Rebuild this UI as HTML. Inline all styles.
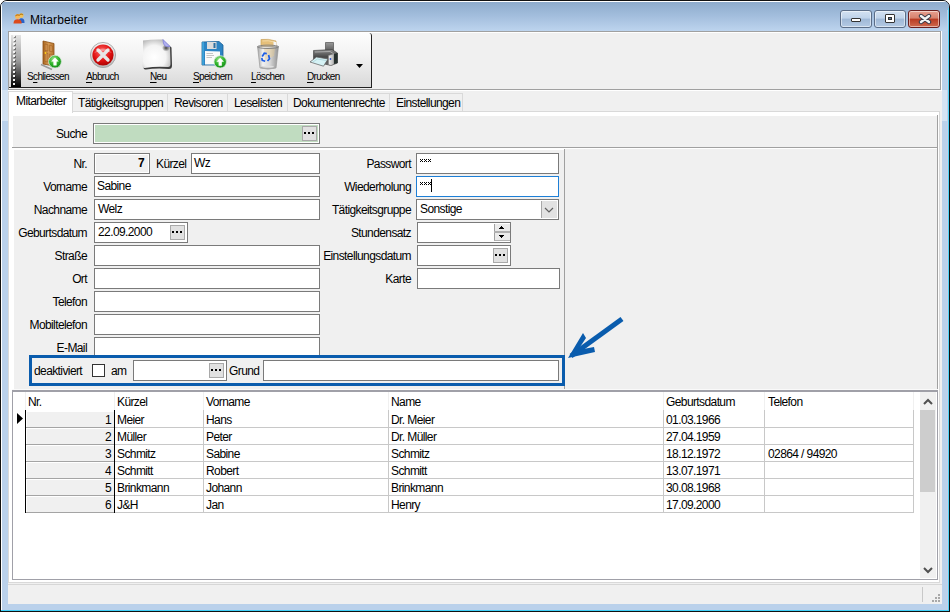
<!DOCTYPE html><html><head><meta charset="utf-8"><style>
*{margin:0;padding:0;box-sizing:border-box}
html,body{width:950px;height:612px;overflow:hidden;background:#fff}
body{font-family:"Liberation Sans",sans-serif;font-size:12px;color:#000;position:relative}
.a{position:absolute}
.lbl{position:absolute;white-space:nowrap;line-height:13px;letter-spacing:-0.6px}
.ell{width:15px;height:15px;background:#e1e1e1;border:1px solid #a9a9a9}
.ell:after{content:"";position:absolute;left:1px;top:5px;width:2px;height:2px;background:#000;box-shadow:4px 0 0 #000,8px 0 0 #000}
.wbtn{position:absolute;top:10px;height:18px;width:32px;border:1px solid #5b6d87;border-radius:3px;background:linear-gradient(#d3e1f1 0,#bfd3ea 45%,#9fb8d6 50%,#b4cae4 100%);box-shadow:inset 0 0 0 1px rgba(255,255,255,.5)}
.tl{position:absolute;top:70px;white-space:nowrap;line-height:13px;font-size:10px;letter-spacing:-0.65px}
.tl u{text-decoration:underline;text-underline-offset:1.5px;text-decoration-thickness:1px}
.tab{position:absolute;top:93px;height:19px;background:#f0f0f0;border:1px solid #d9d9d9;border-bottom:none;line-height:18px;padding-left:5px;white-space:nowrap;letter-spacing:-0.6px}
.gc{position:absolute;white-space:nowrap;line-height:13px;letter-spacing:-0.6px}
</style></head><body>
<div class="a" style="left:0;top:0;width:950px;height:612px;background:#bad1eb;border:1px solid #111;border-radius:7px 7px 0 0;overflow:hidden"><div class="a" style="left:0;top:0;width:948px;height:30px;background:linear-gradient(#fff 0,#fff 1px,#8eabcc 1px,#a3bedd 15px,#bdd4ee 30px)"></div><div class="a" style="left:0;top:0;width:1px;height:611px;background:#fff"></div><div class="a" style="left:1px;top:89px;width:7px;height:31px;background:#d4e3f3"></div><div class="a" style="left:941px;top:89px;width:7px;height:31px;background:#d4e3f3"></div></div>
<div class="a" style="left:0px;top:611px;width:950px;height:1px;background:#111"></div>
<div class="a" style="left:947px;top:10px;width:1px;height:600px;background:#c4d0e8"></div>
<div class="a" style="left:948px;top:8px;width:1px;height:603px;background:#50d4f8"></div>
<div class="a" style="left:1px;top:610px;width:948px;height:1px;background:#40d0f8"></div>
<svg class="a" style="left:13px;top:12px" width="12" height="12" viewBox="0 0 12 12"><circle cx="8.3" cy="3.6" r="2.3" fill="#f2c25a"/><path d="M6.3 2.6 Q8 0.6 10.3 2.4 L10 3.2 Q8 2 6.6 3.4Z" fill="#b8801a"/><path d="M5.5 11 Q5.5 6.3 8.3 6.3 Q11.5 6.3 11.5 10.5 L11.5 11Z" fill="#2a62c8"/><circle cx="4.6" cy="4.4" r="2.5" fill="#f7b85a"/><path d="M2.3 3.6 Q4.4 1.2 6.9 3.2 L6.6 4 Q4.4 2.6 2.6 4.4Z" fill="#c07a18"/><path d="M0.5 11.5 Q0.5 7.2 4.6 7.2 Q8.7 7.2 8.7 11.5Z" fill="#dc4a1c"/></svg>
<div class="lbl" style="left:30px;top:13px;font-size:12px;line-height:15px;letter-spacing:0.1px">Mitarbeiter</div>
<div class="wbtn" style="left:840px"><div class="a" style="left:10px;top:7px;width:10px;height:4px;background:#fff;border:1px solid #333;border-radius:1px"></div></div>
<div class="wbtn" style="left:874px"><div class="a" style="left:10px;top:3px;width:10px;height:9px;background:#fff;border:1px solid #333;border-radius:1px"><div class="a" style="left:2px;top:2px;width:4px;height:3px;background:#5b7ba3;border:1px solid #333"></div></div></div>
<div class="wbtn" style="left:908px;border-color:#6b1e1e;background:linear-gradient(#e8a090 0,#d7816d 45%,#b93a22 50%,#cf6a4e 100%)"><svg class="a" style="left:8px;top:2px" width="16" height="12" viewBox="0 0 16 12"><path d="M4 3 L12 9 M12 3 L4 9" stroke="#3a3a48" stroke-width="4.4" stroke-linecap="round"/><path d="M4 3 L12 9 M12 3 L4 9" stroke="#f4f4f4" stroke-width="2.4" stroke-linecap="round"/></svg></div>
<div class="a" style="left:8px;top:31px;width:934px;height:573px;background:#f0f0f0"></div>
<div class="a" style="left:8px;top:31px;width:933px;height:1px;background:#a0a0a0"></div>
<div class="a" style="left:9px;top:32px;width:931px;height:1px;background:#fff"></div>
<div class="a" style="left:8px;top:31px;width:1px;height:59px;background:#a0a0a0"></div>
<div class="a" style="left:9px;top:32px;width:1px;height:57px;background:#fff"></div>
<div class="a" style="left:940px;top:31px;width:1px;height:59px;background:#a0a0a0"></div>
<div class="a" style="left:941px;top:31px;width:1px;height:60px;background:#fff"></div>
<div class="a" style="left:9px;top:33px;width:363px;height:55px;background:linear-gradient(#fdfdfd,#f3f3f3 40%,#d9d9d9);border-right:1px solid #222;border-bottom:1px solid #222;border-radius:0 3px 0 0"></div>
<div class="a" style="left:11px;top:35px;width:10px;height:52px;background:linear-gradient(#e4e4e4,#9a9a9a 50%,#000)"></div>
<div class="a" style="left:13px;top:35px;width:2px;height:2px;background:#f4f4f4;box-shadow:1px 1px 0 rgba(0,0,0,.4)"></div>
<div class="a" style="left:13px;top:39px;width:2px;height:2px;background:#f4f4f4;box-shadow:1px 1px 0 rgba(0,0,0,.4)"></div>
<div class="a" style="left:13px;top:43px;width:2px;height:2px;background:#f4f4f4;box-shadow:1px 1px 0 rgba(0,0,0,.4)"></div>
<div class="a" style="left:13px;top:47px;width:2px;height:2px;background:#f4f4f4;box-shadow:1px 1px 0 rgba(0,0,0,.4)"></div>
<div class="a" style="left:13px;top:51px;width:2px;height:2px;background:#f4f4f4;box-shadow:1px 1px 0 rgba(0,0,0,.4)"></div>
<div class="a" style="left:13px;top:55px;width:2px;height:2px;background:#f4f4f4;box-shadow:1px 1px 0 rgba(0,0,0,.4)"></div>
<div class="a" style="left:13px;top:59px;width:2px;height:2px;background:#f4f4f4;box-shadow:1px 1px 0 rgba(0,0,0,.4)"></div>
<div class="a" style="left:13px;top:63px;width:2px;height:2px;background:#f4f4f4;box-shadow:1px 1px 0 rgba(0,0,0,.4)"></div>
<div class="a" style="left:13px;top:67px;width:2px;height:2px;background:#f4f4f4;box-shadow:1px 1px 0 rgba(0,0,0,.4)"></div>
<div class="a" style="left:13px;top:71px;width:2px;height:2px;background:#f4f4f4;box-shadow:1px 1px 0 rgba(0,0,0,.4)"></div>
<div class="a" style="left:13px;top:75px;width:2px;height:2px;background:#f4f4f4;box-shadow:1px 1px 0 rgba(0,0,0,.4)"></div>
<div class="a" style="left:13px;top:79px;width:2px;height:2px;background:#f4f4f4;box-shadow:1px 1px 0 rgba(0,0,0,.4)"></div>
<div class="a" style="left:13px;top:83px;width:2px;height:2px;background:#f4f4f4;box-shadow:1px 1px 0 rgba(0,0,0,.4)"></div>
<div class="tl" style="left:27px">S<u>c</u>hliessen</div>
<div class="tl" style="left:86px"><u>A</u>bbruch</div>
<div class="tl" style="left:150px"><u>N</u>eu</div>
<div class="tl" style="left:193px"><u>S</u>peichern</div>
<div class="tl" style="left:251px"><u>L</u>öschen</div>
<div class="tl" style="left:307px"><u>D</u>rucken</div>
<svg class="a" style="left:36px;top:38px" width="30" height="34" viewBox="36 38 30 34"><defs><linearGradient id="dg" x1="0" x2="1"><stop offset="0" stop-color="#a8651f"/><stop offset="0.5" stop-color="#d59a55"/><stop offset="1" stop-color="#b5742e"/></linearGradient></defs><path d="M41 64.5 L52 69.5" stroke="#9a9a9a" stroke-width="1.6"/><path d="M43 41 L54 43.5 L54 66 L43 64 Z" fill="url(#dg)" stroke="#8a4d12" stroke-width="0.8"/><path d="M45 44 L48 44.8 L48 51 L45 50.5Z M49.5 45.2 L52.5 46 L52.5 51.8 L49.5 51.3Z M45 53 L48 53.5 L48 62 L45 61.5Z M49.5 54 L52.5 54.5 L52.5 62.5 L49.5 62Z" fill="#c98a4a" stroke="#9c5c1c" stroke-width="0.5"/><circle cx="45.5" cy="53" r="0.9" fill="#ffd21a"/><defs><radialGradient id="ga1" cx="0.4" cy="0.3" r="0.8"><stop offset="0" stop-color="#9be08a"/><stop offset="0.5" stop-color="#2fb52a"/><stop offset="1" stop-color="#0c7d14"/></radialGradient></defs><circle cx="55" cy="61.6" r="6.4" fill="url(#ga1)" stroke="#d8e8d8" stroke-width="0.8"/><path d="M55 57.4 L58.8 61.4 L56.6 61.4 L56.6 65.4 L53.4 65.4 L53.4 61.4 L51.2 61.4 Z" fill="#fff"/></svg><svg class="a" style="left:88px;top:40px" width="30" height="30" viewBox="88 40 30 30"><defs><radialGradient id="rg" cx="0.45" cy="0.35" r="0.7"><stop offset="0" stop-color="#ff6a6a"/><stop offset="0.6" stop-color="#e01010"/><stop offset="1" stop-color="#a00000"/></radialGradient><linearGradient id="ring" x1="0" y1="0" x2="0" y2="1"><stop offset="0" stop-color="#f4f4f4"/><stop offset="1" stop-color="#b8b8b8"/></linearGradient></defs><circle cx="103" cy="55" r="12.6" fill="url(#ring)" stroke="#9c9c9c" stroke-width="0.8"/><circle cx="103" cy="55" r="10.6" fill="url(#rg)"/><path d="M98 50 L108 60 M108 50 L98 60" stroke="#e6e6e6" stroke-width="3.4" stroke-linecap="round"/><path d="M94 53 Q103 44 112 53 Q103 49 94 53Z" fill="#fff" opacity="0.35"/></svg><svg class="a" style="left:138px;top:36px" width="38" height="36" viewBox="138 36 38 36"><defs><radialGradient id="pg" cx="0.42" cy="0.62" r="0.75"><stop offset="0" stop-color="#ffffff"/><stop offset="0.55" stop-color="#f4f4f4"/><stop offset="1" stop-color="#a8a8a8"/></radialGradient><radialGradient id="fs" cx="0.5" cy="0.5" r="0.5"><stop offset="0" stop-color="#000" stop-opacity="0.7"/><stop offset="1" stop-color="#000" stop-opacity="0"/></radialGradient></defs><path d="M144.5 41.5 Q153 40 163.5 40.5 L171.5 47.5 L172 65.5 Q172 69 169 69 Q156 68 146 69.5 Q143.5 70 143.5 67.5Z" fill="#1e1e1e" opacity="0.85"/><path d="M143 40.5 Q153 39 163 39.5 L170 46.5 L170.5 64 Q170.5 66.8 168 67 Q156 66 145 68 Q142.5 68.5 142.5 66 Q143.5 54 143 40.5Z" fill="url(#pg)"/><ellipse cx="166" cy="48" rx="4" ry="3.5" fill="url(#fs)"/><path d="M163 39.5 L170 46.5 Q166.5 47.5 164.5 45.5 Q163 43.5 163 39.5Z" fill="#b0b0f0" stroke="#7070d8" stroke-width="0.6"/></svg><svg class="a" style="left:198px;top:38px" width="32" height="34" viewBox="198 38 32 34"><path d="M202 42 L219 41.5 L223 45 L223 65 L202 65 Z" fill="#2d84c4" stroke="#1a5f96" stroke-width="0.8"/><path d="M203 42 L203 65" stroke="#4fc0f0" stroke-width="1"/><path d="M207 42 L216.5 42 L216.5 49 L207 49 Z" fill="#dcdcdc"/><path d="M213.5 43 L215.5 43 L215.5 48 L213.5 48Z" fill="#2d6fa0"/><path d="M205 51 L220 51.5 L220 64.5 L205 64.5 Z" fill="#fafafa"/><path d="M206.5 53.5H213 M206.5 55.5H214 M206.5 57.5H212" stroke="#a0a0a0" stroke-width="0.6"/><defs><radialGradient id="ga2" cx="0.4" cy="0.3" r="0.8"><stop offset="0" stop-color="#9be08a"/><stop offset="0.5" stop-color="#2fb52a"/><stop offset="1" stop-color="#0c7d14"/></radialGradient></defs><circle cx="220.2" cy="61.9" r="6.2" fill="url(#ga2)" stroke="#d8e8d8" stroke-width="0.8"/><path d="M220.2 57.699999999999996 L224.0 61.699999999999996 L221.79999999999998 61.699999999999996 L221.79999999999998 65.7 L218.6 65.7 L218.6 61.699999999999996 L216.39999999999998 61.699999999999996 Z" fill="#fff"/></svg><svg class="a" style="left:252px;top:36px" width="32" height="36" viewBox="252 36 32 36"><defs><linearGradient id="bg1" x1="0" x2="1"><stop offset="0" stop-color="#9c9c9c"/><stop offset="0.25" stop-color="#f2f2f2"/><stop offset="0.6" stop-color="#d6d6d6"/><stop offset="1" stop-color="#8a8a8a"/></linearGradient></defs><path d="M261 49 L261 39.5 Q268 38.5 276 41 L276 49Z" fill="#e6c07a" stroke="#c49a50" stroke-width="0.6"/><path d="M262.5 41 Q268 40 274.5 42" stroke="#f6e0b0" stroke-width="0.8" fill="none"/><path d="M273.5 41.5 L276 42 L276 48 L273.5 48Z" fill="#f6f6f6"/><path d="M257.5 46.5 L278.5 46.5 L276 68 Q268 70 260 68 Z" fill="url(#bg1)" opacity="0.92" stroke="#8c8c8c" stroke-width="0.6"/><path d="M264 48 L275 48 L274 56 L265 60Z" fill="#e8cc90" opacity="0.45"/><ellipse cx="268" cy="46.8" rx="10.5" ry="1.7" fill="none" stroke="#7e7e7e" stroke-width="0.9"/><ellipse cx="268" cy="67.6" rx="7.6" ry="1.6" fill="#a9a9a9"/><ellipse cx="268" cy="66.8" rx="6" ry="1" fill="#e0e0e0"/><path d="M262.2 56.5 L264.3 53.2 L266.8 53.6" stroke="#1d5ee6" stroke-width="1.7" fill="none"/><path d="M268.6 55 L269.5 58.8 L267.5 61" stroke="#1d5ee6" stroke-width="1.7" fill="none"/><path d="M265.2 61.2 L262.3 60.4 L261.8 58" stroke="#1d5ee6" stroke-width="1.7" fill="none"/></svg><svg class="a" style="left:305px;top:38px" width="38" height="32" viewBox="305 38 38 32"><defs><linearGradient id="pb" x1="0" y1="0" x2="0" y2="1"><stop offset="0" stop-color="#8a8a8a"/><stop offset="0.45" stop-color="#4a4a4a"/><stop offset="1" stop-color="#6a6a6a"/></linearGradient><linearGradient id="ph" x1="0" y1="0" x2="0" y2="1"><stop offset="0" stop-color="#9a9a9a"/><stop offset="1" stop-color="#5a5a5a"/></linearGradient><linearGradient id="ps" x1="0" y1="0" x2="1" y2="0"><stop offset="0" stop-color="#f4f4f4"/><stop offset="1" stop-color="#b0b0b0"/></linearGradient></defs><path d="M325.5 42.5 L333.5 42.5 L333.5 51 L325.5 51Z" fill="url(#ph)" stroke="#3e3e3e" stroke-width="0.6"/><path d="M313.5 50.5 L332 49.5 L337.5 53 L337.5 63 L331 65.5 L313.5 61.5 Z" fill="url(#pb)" stroke="#3a3a3a" stroke-width="0.6"/><path d="M315 52 L330 51.5 L334 54" stroke="#b8b8b8" stroke-width="0.8" fill="none"/><path d="M328.5 55.5 L334 53.8 L334 64 L331 65.5 L328.5 64.5Z" fill="url(#ps)" stroke="#7a7a7a" stroke-width="0.5"/><path d="M334 54 L337.5 53 L337.5 63 L334 64Z" fill="#26302e"/><circle cx="330.5" cy="59" r="0.9" fill="#3355cc"/><path d="M310 62 L316.5 57 L328 59 L323.5 66.2 Z" fill="#d6f2f5" stroke="#5a5a5a" stroke-width="0.7"/><path d="M313 62 L317.5 59 L326 60.5" stroke="#9cc9d0" stroke-width="0.6" fill="none"/></svg>
<svg class="a" style="left:356px;top:64px" width="8" height="5"><path d="M0 0H7L3.5 4Z" fill="#000"/></svg>
<div class="a" style="left:8px;top:89px;width:933px;height:1px;background:#a0a0a0"></div>
<div class="a" style="left:8px;top:90px;width:934px;height:1px;background:#fff"></div>
<div class="tab" style="left:72px;width:96px;padding-left:5px">Tätigkeitsgruppen</div>
<div class="tab" style="left:167px;width:61px;padding-left:6px">Revisoren</div>
<div class="tab" style="left:227px;width:61px;padding-left:6px">Leselisten</div>
<div class="tab" style="left:287px;width:103px;padding-left:5px">Dokumentenrechte</div>
<div class="tab" style="left:389px;width:74px;padding-left:6px">Einstellungen</div>
<div class="a" style="left:8px;top:111px;width:932px;height:472px;background:#fff;border:1px solid #d9d9d9"></div>
<div class="tab" style="left:8px;top:91px;height:22px;width:65px;background:#fff;border-color:#d9d9d9;padding-left:7px;line-height:19px">Mitarbeiter</div>
<div class="a" style="left:13px;top:116px;width:924px;height:31px;background:#f0f0f0"></div>
<div class="a" style="left:12px;top:147px;width:926px;height:1px;background:#a0a0a0"></div>
<div class="a" style="left:937px;top:115px;width:1px;height:275px;background:#a0a0a0"></div>
<div class="lbl" style="right:863px;top:128px;">Suche</div>
<div class="a" style="left:93px;top:123px;width:227px;height:21px;background:#c0dcc0;border:1px solid #7a7a7a;box-shadow:inset 0 0 0 1px #fff"></div>
<div class="a ell" style="left:302px;top:126px"></div>
<div class="a" style="left:14px;top:150px;width:550px;height:239px;background:#f0f0f0"></div>
<div class="a" style="left:564px;top:149px;width:1px;height:240px;background:#a0a0a0"></div>
<div class="a" style="left:565px;top:149px;width:372px;height:240px;background:#f0f0f0"></div>
<div class="lbl" style="right:863px;top:158px;">Nr.</div>
<div class="lbl" style="right:863px;top:181px;">Vorname</div>
<div class="lbl" style="right:863px;top:204px;">Nachname</div>
<div class="lbl" style="right:863px;top:227px;">Geburtsdatum</div>
<div class="lbl" style="right:863px;top:250px;">Straße</div>
<div class="lbl" style="right:863px;top:273px;">Ort</div>
<div class="lbl" style="right:863px;top:296px;">Telefon</div>
<div class="lbl" style="right:863px;top:319px;">Mobiltelefon</div>
<div class="lbl" style="right:863px;top:342px;">E-Mail</div>
<div class="a" style="left:94px;top:153px;width:56px;height:21px;background:#f0f0f0;border:1px solid #7a7a7a;box-shadow:inset 0 0 0 1px #fff"><div class="lbl" style="right:5px;top:3px;font-weight:bold">7</div></div>
<div class="lbl" style="left:156px;top:158px;">Kürzel</div>
<div class="a" style="left:191px;top:153px;width:129px;height:21px;background:#fff;border:1px solid #7a7a7a;box-shadow:inset 0 0 0 1px #fff"><div class="lbl" style="left:2px;top:3px">Wz</div></div>
<div class="a" style="left:94px;top:176px;width:226px;height:21px;background:#fff;border:1px solid #7a7a7a;box-shadow:inset 0 0 0 1px #fff"><div class="lbl" style="left:3px;top:3px;left:2px">Sabine</div></div>
<div class="a" style="left:94px;top:199px;width:226px;height:21px;background:#fff;border:1px solid #7a7a7a;box-shadow:inset 0 0 0 1px #fff"><div class="lbl" style="left:3px;top:3px">Welz</div></div>
<div class="a" style="left:94px;top:222px;width:94px;height:21px;background:#fff;border:1px solid #7a7a7a;box-shadow:inset 0 0 0 1px #fff"><div class="lbl" style="left:3px;top:3px">22.09.2000</div></div>
<div class="a ell" style="left:170px;top:225px"></div>
<div class="a" style="left:94px;top:245px;width:226px;height:21px;background:#fff;border:1px solid #7a7a7a;box-shadow:inset 0 0 0 1px #fff"></div>
<div class="a" style="left:94px;top:268px;width:226px;height:21px;background:#fff;border:1px solid #7a7a7a;box-shadow:inset 0 0 0 1px #fff"></div>
<div class="a" style="left:94px;top:291px;width:226px;height:21px;background:#fff;border:1px solid #7a7a7a;box-shadow:inset 0 0 0 1px #fff"></div>
<div class="a" style="left:94px;top:314px;width:226px;height:21px;background:#fff;border:1px solid #7a7a7a;box-shadow:inset 0 0 0 1px #fff"></div>
<div class="a" style="left:94px;top:337px;width:226px;height:21px;background:#fff;border:1px solid #7a7a7a;box-shadow:inset 0 0 0 1px #fff"></div>
<div class="lbl" style="right:539px;top:158px;">Passwort</div>
<div class="lbl" style="right:539px;top:181px;">Wiederholung</div>
<div class="lbl" style="right:539px;top:204px;">Tätigkeitsgruppe</div>
<div class="lbl" style="right:539px;top:227px;">Stundensatz</div>
<div class="lbl" style="right:539px;top:250px;">Einstellungsdatum</div>
<div class="lbl" style="right:539px;top:273px;">Karte</div>
<div class="a" style="left:416px;top:153px;width:143px;height:21px;background:#fff;border:1px solid #7a7a7a;box-shadow:inset 0 0 0 1px #fff"><svg class="a" style="left:3px;top:5px" width="12" height="4" shape-rendering="crispEdges"><rect x="0" y="0" width="1" height="1"/><rect x="2" y="0" width="1" height="1"/><rect x="1" y="1" width="1" height="1"/><rect x="0" y="2" width="1" height="1"/><rect x="2" y="2" width="1" height="1"/><rect x="4" y="0" width="1" height="1"/><rect x="6" y="0" width="1" height="1"/><rect x="5" y="1" width="1" height="1"/><rect x="4" y="2" width="1" height="1"/><rect x="6" y="2" width="1" height="1"/><rect x="8" y="0" width="1" height="1"/><rect x="10" y="0" width="1" height="1"/><rect x="9" y="1" width="1" height="1"/><rect x="8" y="2" width="1" height="1"/><rect x="10" y="2" width="1" height="1"/></svg></div>
<div class="a" style="left:416px;top:176px;width:143px;height:21px;background:#fff;border:1px solid #1e7fd6;box-shadow:inset 0 0 0 1px #fff"><svg class="a" style="left:3px;top:5px" width="12" height="4" shape-rendering="crispEdges"><rect x="0" y="0" width="1" height="1"/><rect x="2" y="0" width="1" height="1"/><rect x="1" y="1" width="1" height="1"/><rect x="0" y="2" width="1" height="1"/><rect x="2" y="2" width="1" height="1"/><rect x="4" y="0" width="1" height="1"/><rect x="6" y="0" width="1" height="1"/><rect x="5" y="1" width="1" height="1"/><rect x="4" y="2" width="1" height="1"/><rect x="6" y="2" width="1" height="1"/><rect x="8" y="0" width="1" height="1"/><rect x="10" y="0" width="1" height="1"/><rect x="9" y="1" width="1" height="1"/><rect x="8" y="2" width="1" height="1"/><rect x="10" y="2" width="1" height="1"/></svg><div class="a" style="left:14px;top:2px;width:1px;height:13px;background:#000"></div></div>
<div class="a" style="left:416px;top:199px;width:143px;height:21px;background:#fff;border:1px solid #7a7a7a;box-shadow:inset 0 0 0 1px #fff"><div class="lbl" style="left:3px;top:3px">Sonstige</div><div class="a" style="left:124px;top:1px;width:16px;height:17px;background:#e2e2e2;border-left:1px solid #a8a8a8"><svg class="a" style="left:2px;top:6px" width="10" height="6"><path d="M1 1L5 5L9 1" stroke="#606060" fill="none" stroke-width="1.2"/></svg></div></div>
<div class="a" style="left:417px;top:222px;width:94px;height:21px;background:#fff;border:1px solid #7a7a7a;box-shadow:inset 0 0 0 1px #fff"><div class="a" style="left:76px;top:1px;width:16px;height:17px;background:#ebebeb;border-left:1px solid #a0a0a0;border-bottom:1px solid #b4b4b4"></div><div class="a" style="left:76px;top:8px;width:16px;height:2px;background:#b0b0b0"></div><svg class="a" style="left:81px;top:3px" width="5" height="12" shape-rendering="crispEdges"><rect x="2" y="0" width="1" height="1"/><rect x="1" y="1" width="3" height="1"/><rect x="0" y="2" width="5" height="1"/><rect x="0" y="9" width="5" height="1"/><rect x="1" y="10" width="3" height="1"/><rect x="2" y="11" width="1" height="1"/></svg></div>
<div class="a" style="left:417px;top:245px;width:94px;height:21px;background:#fff;border:1px solid #7a7a7a;box-shadow:inset 0 0 0 1px #fff"></div>
<div class="a ell" style="left:493px;top:248px"></div>
<div class="a" style="left:417px;top:268px;width:143px;height:21px;background:#fff;border:1px solid #7a7a7a;box-shadow:inset 0 0 0 1px #fff"></div>
<div class="a" style="left:29px;top:355px;width:536px;height:31px;border:3px solid #0a5cad;background:#f0f0f0"></div>
<div class="lbl" style="left:34px;top:365px;">deaktiviert</div>
<div class="a" style="left:92px;top:364px;width:13px;height:13px;background:#fff;border:1px solid #333"></div>
<div class="lbl" style="left:111px;top:365px;">am</div>
<div class="a" style="left:133px;top:360px;width:94px;height:21px;background:#fff;border:1px solid #7a7a7a;box-shadow:inset 0 0 0 1px #fff"></div>
<div class="a ell" style="left:209px;top:363px"></div>
<div class="lbl" style="left:229px;top:365px;">Grund</div>
<div class="a" style="left:263px;top:360px;width:296px;height:21px;background:#fff;border:1px solid #7a7a7a;box-shadow:inset 0 0 0 1px #fff"></div>
<svg class="a" style="left:560px;top:310px" width="70" height="55" viewBox="560 310 70 55"><path d="M622 319 L571 356" stroke="#0a5cad" stroke-width="5"/><path d="M568 358 L583 333 L586 338 L578 350 L594 347 L595 352 Z" fill="#0a5cad"/></svg>
<div class="a" style="left:12px;top:389px;width:926px;height:1px;background:#fafafa"></div>
<div class="a" style="left:12px;top:390px;width:926px;height:190px;background:#fff;border:2px solid #a0a0a8;border-right-width:1px;border-bottom-width:1px;border-left-width:1px"></div>
<div class="gc" style="left:28px;top:396px">Nr.</div>
<div class="gc" style="left:117px;top:396px">Kürzel</div>
<div class="gc" style="left:206px;top:396px">Vorname</div>
<div class="gc" style="left:391px;top:396px">Name</div>
<div class="gc" style="left:666px;top:396px">Geburtsdatum</div>
<div class="gc" style="left:768px;top:396px">Telefon</div>
<div class="a" style="left:25px;top:392px;width:1px;height:18px;background:#f0f0f0"></div>
<div class="a" style="left:114px;top:392px;width:1px;height:18px;background:#f0f0f0"></div>
<div class="a" style="left:203px;top:392px;width:1px;height:18px;background:#f0f0f0"></div>
<div class="a" style="left:388px;top:392px;width:1px;height:18px;background:#f0f0f0"></div>
<div class="a" style="left:663px;top:392px;width:1px;height:18px;background:#f0f0f0"></div>
<div class="a" style="left:764px;top:392px;width:1px;height:18px;background:#f0f0f0"></div>
<div class="a" style="left:913px;top:392px;width:1px;height:18px;background:#f0f0f0"></div>
<div class="a" style="left:27px;top:412px;width:87px;height:15px;background:#f0f0f0"></div>
<div class="gc" style="right:839px;top:414px">1</div>
<div class="gc" style="left:117px;top:414px">Meier</div>
<div class="gc" style="left:206px;top:414px">Hans</div>
<div class="gc" style="left:391px;top:414px">Dr. Meier</div>
<div class="gc" style="left:666px;top:414px">01.03.1966</div>
<div class="gc" style="left:768px;top:414px"></div>
<div class="a" style="left:26px;top:427px;width:888px;height:1px;background:#c8c8c8"></div>
<div class="a" style="left:26px;top:427px;width:88px;height:1px;background:#a4a4a4"></div>
<div class="a" style="left:27px;top:429px;width:87px;height:15px;background:#f0f0f0"></div>
<div class="gc" style="right:839px;top:431px">2</div>
<div class="gc" style="left:117px;top:431px">Müller</div>
<div class="gc" style="left:206px;top:431px">Peter</div>
<div class="gc" style="left:391px;top:431px">Dr. Müller</div>
<div class="gc" style="left:666px;top:431px">27.04.1959</div>
<div class="gc" style="left:768px;top:431px"></div>
<div class="a" style="left:26px;top:444px;width:888px;height:1px;background:#c8c8c8"></div>
<div class="a" style="left:26px;top:444px;width:88px;height:1px;background:#a4a4a4"></div>
<div class="a" style="left:27px;top:446px;width:87px;height:15px;background:#f0f0f0"></div>
<div class="gc" style="right:839px;top:448px">3</div>
<div class="gc" style="left:117px;top:448px">Schmitz</div>
<div class="gc" style="left:206px;top:448px">Sabine</div>
<div class="gc" style="left:391px;top:448px">Schmitz</div>
<div class="gc" style="left:666px;top:448px">18.12.1972</div>
<div class="gc" style="left:768px;top:448px">02864 / 94920</div>
<div class="a" style="left:26px;top:461px;width:888px;height:1px;background:#c8c8c8"></div>
<div class="a" style="left:26px;top:461px;width:88px;height:1px;background:#a4a4a4"></div>
<div class="a" style="left:27px;top:463px;width:87px;height:15px;background:#f0f0f0"></div>
<div class="gc" style="right:839px;top:465px">4</div>
<div class="gc" style="left:117px;top:465px">Schmitt</div>
<div class="gc" style="left:206px;top:465px">Robert</div>
<div class="gc" style="left:391px;top:465px">Schmitt</div>
<div class="gc" style="left:666px;top:465px">13.07.1971</div>
<div class="gc" style="left:768px;top:465px"></div>
<div class="a" style="left:26px;top:478px;width:888px;height:1px;background:#c8c8c8"></div>
<div class="a" style="left:26px;top:478px;width:88px;height:1px;background:#a4a4a4"></div>
<div class="a" style="left:27px;top:480px;width:87px;height:15px;background:#f0f0f0"></div>
<div class="gc" style="right:839px;top:482px">5</div>
<div class="gc" style="left:117px;top:482px">Brinkmann</div>
<div class="gc" style="left:206px;top:482px">Johann</div>
<div class="gc" style="left:391px;top:482px">Brinkmann</div>
<div class="gc" style="left:666px;top:482px">30.08.1968</div>
<div class="gc" style="left:768px;top:482px"></div>
<div class="a" style="left:26px;top:495px;width:888px;height:1px;background:#c8c8c8"></div>
<div class="a" style="left:26px;top:495px;width:88px;height:1px;background:#a4a4a4"></div>
<div class="a" style="left:27px;top:497px;width:87px;height:15px;background:#f0f0f0"></div>
<div class="gc" style="right:839px;top:499px">6</div>
<div class="gc" style="left:117px;top:499px">J&amp;H</div>
<div class="gc" style="left:206px;top:499px">Jan</div>
<div class="gc" style="left:391px;top:499px">Henry</div>
<div class="gc" style="left:666px;top:499px">17.09.2000</div>
<div class="gc" style="left:768px;top:499px"></div>
<div class="a" style="left:26px;top:512px;width:888px;height:1px;background:#c8c8c8"></div>
<div class="a" style="left:26px;top:512px;width:88px;height:1px;background:#a4a4a4"></div>
<div class="a" style="left:25px;top:410px;width:1px;height:103px;background:#000"></div>
<div class="a" style="left:114px;top:410px;width:1px;height:103px;background:#000"></div>
<div class="a" style="left:203px;top:410px;width:1px;height:103px;background:#c8c8c8"></div>
<div class="a" style="left:388px;top:410px;width:1px;height:103px;background:#c8c8c8"></div>
<div class="a" style="left:663px;top:410px;width:1px;height:103px;background:#c8c8c8"></div>
<div class="a" style="left:764px;top:410px;width:1px;height:103px;background:#c8c8c8"></div>
<div class="a" style="left:913px;top:410px;width:1px;height:103px;background:#c8c8c8"></div>
<svg class="a" style="left:17px;top:413px" width="7" height="11"><path d="M0 0L6 5.5L0 11Z" fill="#000"/></svg>
<div class="a" style="left:920px;top:392px;width:16px;height:186px;background:#f0f0f0"></div>
<div class="a" style="left:920px;top:410px;width:15px;height:82px;background:#cdcdcd"></div>
<svg class="a" style="left:923px;top:398px" width="10" height="7"><path d="M1 6L5 2L9 6" stroke="#505050" stroke-width="2" fill="none"/></svg>
<svg class="a" style="left:923px;top:567px" width="10" height="7"><path d="M1 1L5 5L9 1" stroke="#505050" stroke-width="2" fill="none"/></svg>
<div class="a" style="left:8px;top:584px;width:934px;height:1px;background:#d7d7d7"></div>
<div class="a" style="left:922px;top:587px;width:1px;height:15px;background:#c8c8c8"></div>
<div class="a" style="left:938px;top:594px;width:2px;height:2px;background:#a8a8a8"></div>
<div class="a" style="left:935px;top:597px;width:2px;height:2px;background:#a8a8a8"></div>
<div class="a" style="left:938px;top:597px;width:2px;height:2px;background:#a8a8a8"></div>
<div class="a" style="left:932px;top:600px;width:2px;height:2px;background:#a8a8a8"></div>
<div class="a" style="left:935px;top:600px;width:2px;height:2px;background:#a8a8a8"></div>
<div class="a" style="left:938px;top:600px;width:2px;height:2px;background:#a8a8a8"></div>
</body></html>
